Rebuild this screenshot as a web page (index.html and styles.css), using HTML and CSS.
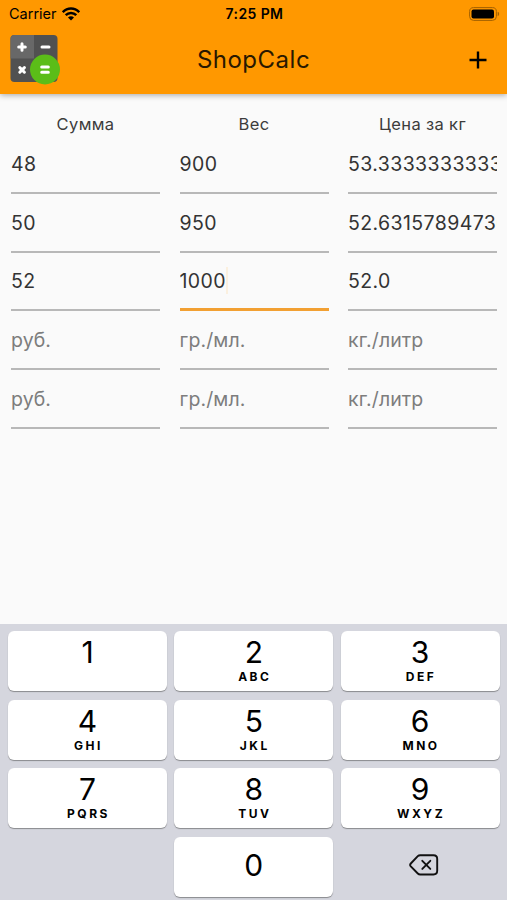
FILE: index.html
```html
<!DOCTYPE html>
<html lang="ru">
<head>
    <meta charset="UTF-8">
    <meta name="viewport" content="width=device-width, initial-scale=1.0">
    <title>ShopCalc</title>
    <link rel="stylesheet" href="styles.css">
</head>
<body>
    <header class="header">
        <div class="status-bar">
            <div class="carrier">
                <span>Carrier</span>
                <svg class="wifi" width="18" height="14" viewBox="0 0 18 14" fill="none" stroke="#000" stroke-width="2.5">
                    <path d="M0.8 5.2C5.4 0.4 12.6 0.4 17.2 5.2"/>
                    <path d="M3.7 8.2C6.7 5.2 11.3 5.2 14.3 8.2"/>
                    <path d="M6 10.4C7.8 8.8 10.2 8.8 12 10.4L9 13.4Z" fill="#000" stroke="none"/>
                </svg>
            </div>
            <span class="time">7:25 PM</span>
            <svg class="battery" width="31" height="14" viewBox="0 0 31 14">
                <rect x="0.6" y="0.6" width="26.8" height="12.8" rx="4" fill="none" stroke="#a36100"/>
                <rect x="2.5" y="2.5" width="22.5" height="9" rx="2" fill="#000"/>
                <path d="M28.7 4.8C30.6 5.3 30.6 8.7 28.7 9.2Z" fill="#a36100"/>
            </svg>
        </div>
        <div class="app-bar">
            <svg class="logo" width="50" height="50" viewBox="0 0 50 50">
                <rect x="0.5" y="0" width="47" height="47" rx="4" fill="#515151"/>
                <path d="M4.5 0H24V23.5H0.5V4Q0.5 0 4.5 0Z" fill="#686868"/>
                <circle cx="35" cy="34.5" r="15" fill="#5bbd18"/>
                <g stroke="#fff" stroke-width="3" stroke-linecap="round">
                    <path d="M8.7 12H15.3M12 8.7V15.3M32 12H39"/>
                    <path d="M9.8 32.6L14.4 37.2M14.4 32.6L9.8 37.2"/>
                    <path d="M31.7 31.9H38.3M31.7 37.2H38.3"/>
                </g>
            </svg>
            <h1 class="title">ShopCalc</h1>
            <svg class="add" width="18" height="18" viewBox="0 0 18 18">
                <path d="M9 0.5V17.5M0.5 9H17.5" stroke="#000" stroke-width="2.4"/>
            </svg>
        </div>
    </header>

    <main class="table">
        <div class="label">Сумма</div>
        <div class="label">Вес</div>
        <div class="label">Цена за кг</div>

        <div class="field"><input type="text" value="48"></div>
        <div class="field"><input type="text" value="900"></div>
        <div class="field"><input type="text" value="53.333333333333336"></div>

        <div class="field"><input type="text" value="50"></div>
        <div class="field"><input type="text" value="950"></div>
        <div class="field"><input type="text" value="52.63157894736842"></div>

        <div class="field"><input type="text" value="52"></div>
        <div class="field active"><input type="text" value="1000"><i class="cursor"></i></div>
        <div class="field"><input type="text" value="52.0"></div>

        <div class="field"><input type="text" placeholder="руб."></div>
        <div class="field"><input type="text" placeholder="гр./мл."></div>
        <div class="field"><input type="text" placeholder="кг./литр"></div>

        <div class="field"><input type="text" placeholder="руб."></div>
        <div class="field"><input type="text" placeholder="гр./мл."></div>
        <div class="field"><input type="text" placeholder="кг./литр"></div>
    </main>

    <div class="keyboard">
        <button class="key">1</button>
        <button class="key">2<span>ABC</span></button>
        <button class="key">3<span>DEF</span></button>
        <button class="key">4<span>GHI</span></button>
        <button class="key">5<span>JKL</span></button>
        <button class="key">6<span>MNO</span></button>
        <button class="key">7<span>PQRS</span></button>
        <button class="key">8<span>TUV</span></button>
        <button class="key">9<span>WXYZ</span></button>
        <div></div>
        <button class="key zero">0</button>
        <button class="key delete">
            <svg width="30" height="22" viewBox="0 0 30 22" fill="none" stroke="#111" stroke-width="1.9" stroke-linejoin="round" stroke-linecap="round">
                <path d="M11.2 1.2H24.5Q28.2 1.2 28.2 4.9V16.8Q28.2 20.5 24.5 20.5H11.2Q9.8 20.5 8.8 19.5L1.8 12.3Q0.5 10.9 1.8 9.5L8.8 2.2Q9.8 1.2 11.2 1.2Z"/>
                <path d="M13.3 6.8L21.3 14.9M21.3 6.8L13.3 14.9"/>
            </svg>
        </button>
    </div>
</body>
</html>
```

FILE: styles.css
```css
* {
    box-sizing: border-box;
}

body {
    margin: 0;
    height: 900px;
    display: flex;
    flex-direction: column;
    font-family: Inter, "Liberation Sans", sans-serif;
    background-color: #fafafa;
    overflow: hidden;
}

.header {
    height: 94px;
    background-color: #ff9800;
    box-shadow: 0 1px 6px rgba(0, 0, 0, 0.35);
}

.status-bar {
    display: grid;
    grid-template-columns: 1fr auto 1fr;
    align-items: center;
    height: 27px;
    padding: 0 7px 0 9px;
    font-size: 14.5px;
}

.carrier {
    display: flex;
    align-items: center;
    gap: 5px;
}

.time {
    font-size: 14px;
    font-weight: 600;
    letter-spacing: 0.4px;
}

.battery {
    justify-self: end;
}

.app-bar {
    display: grid;
    grid-template-columns: 1fr auto 1fr;
    align-items: center;
    height: 65px;
    padding: 0 20px 0 10px;
}

.title {
    margin: 0 0 0 10px;
    font-size: 24px;
    font-weight: 400;
    letter-spacing: 0.5px;
    color: #291800;
}

.add {
    justify-self: end;
}

.table {
    flex: 1;
    display: grid;
    grid-template-columns: repeat(3, 149px);
    grid-template-rows: 25px;
    grid-auto-rows: 58.7px;
    column-gap: 19.5px;
    padding: 17px 10px 0 11px;
}

.label {
    line-height: 27px;
    font-size: 16.5px;
    letter-spacing: 0.35px;
    text-align: center;
    color: #3c3c3c;
}

.field {
    position: relative;
    height: 58px;
    border-bottom: 2px solid #b8b8b8;
}

.field input {
    display: block;
    width: 100%;
    height: 56px;
    padding: 0;
    border: none;
    outline: none;
    background: none;
    font-family: inherit;
    font-size: 19.5px;
    letter-spacing: 0.4px;
    color: #333;
}

.field input::placeholder {
    letter-spacing: 0.1px;
    color: #7d7d7d;
}

.active {
    border-bottom: 3px solid #f2a032;
}

.cursor {
    position: absolute;
    left: 46px;
    top: 14px;
    width: 2px;
    height: 27px;
    background-color: #fbf0df;
}

.keyboard {
    display: grid;
    grid-template-columns: repeat(3, 159px);
    grid-auto-rows: 60px;
    gap: 8.6px 7.3px;
    height: 276px;
    padding: 7px 8px 0;
    background-color: #d5d6de;
}

.key {
    display: flex;
    flex-direction: column;
    align-items: center;
    padding: 3px 0 0;
    border: none;
    border-radius: 6px;
    background-color: #fff;
    box-shadow: 0 1px 1px #898a8d;
    font-family: inherit;
    font-size: 30px;
    line-height: 37px;
    color: #000;
}

.key span {
    margin-left: 2px;
    font-size: 12px;
    font-weight: 700;
    line-height: 12px;
    letter-spacing: 2.5px;
}

.zero {
    justify-content: center;
    padding: 0 0 3px;
}

.delete {
    justify-content: center;
    padding: 0 0 4px 7px;
    background: none;
    box-shadow: none;
}
```
